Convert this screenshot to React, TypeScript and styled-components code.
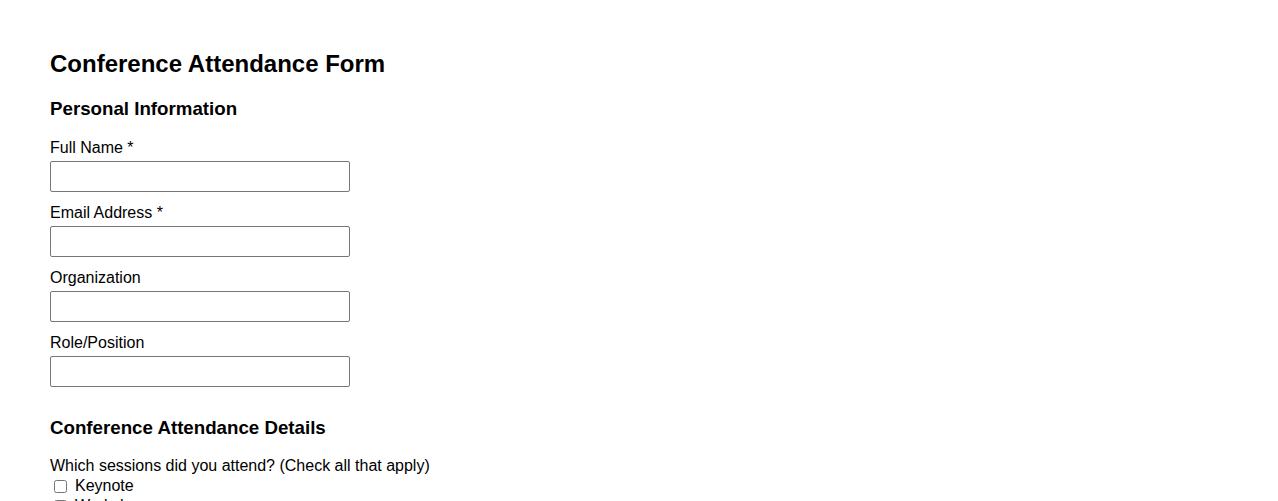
import styled, { createGlobalStyle } from "styled-components";

const GlobalStyle = createGlobalStyle`
  body {
    margin: 0;
    background: #fff;
    color: #000;
    font-family: "Liberation Sans", Arial, sans-serif;
  }
`;

const Page = styled.form`
  padding: 50px 50px;
`;

const Title = styled.h1`
  font-size: 24px;
  font-weight: bold;
  margin: 0 0 20px;
`;

const SectionTitle = styled.h2<{ $top?: number; $bottom?: number }>`
  font-size: 18.72px;
  font-weight: bold;
  margin: ${(p) => p.$top ?? 0}px 0 ${(p) => p.$bottom ?? 19}px;
`;

const Field = styled.div`
  display: flex;
  flex-direction: column;
  align-items: flex-start;
  margin-bottom: 12px;
`;

const Label = styled.label`
  font-size: 16px;
  margin-bottom: 4px;
`;

const TextInput = styled.input`
  box-sizing: border-box;
  width: 300px;
  height: 31px;
  border: 1px solid #767676;
  border-radius: 2px;
  padding: 4px 6px;
  font: 16px "Liberation Sans", Arial, sans-serif;
`;

const Question = styled.div`
  font-size: 16px;
  margin: 0 0 1px;
`;

const CheckRow = styled.label`
  display: flex;
  align-items: center;
  font-size: 16px;
  line-height: 20px;

  input {
    margin: 0 8px 0 4px;
    width: 13px;
    height: 13px;
  }
`;

const personal = [
  { id: "name", label: "Full Name *", type: "text" },
  { id: "email", label: "Email Address *", type: "email" },
  { id: "org", label: "Organization", type: "text" },
  { id: "role", label: "Role/Position", type: "text" },
];

const sessions = ["Keynote", "Workshops", "Panels", "Networking"];

export default function App() {
  return (
    <>
      <GlobalStyle />
      <Page>
        <Title>Conference Attendance Form</Title>
        <SectionTitle>Personal Information</SectionTitle>
        {personal.map((f) => (
          <Field key={f.id}>
            <Label htmlFor={f.id}>{f.label}</Label>
            <TextInput id={f.id} type={f.type} />
          </Field>
        ))}
        <SectionTitle $top={30} $bottom={18}>
          Conference Attendance Details
        </SectionTitle>
        <Question>Which sessions did you attend? (Check all that apply)</Question>
        {sessions.map((s) => (
          <CheckRow key={s}>
            <input type="checkbox" />
            {s}
          </CheckRow>
        ))}
      </Page>
    </>
  );
}
